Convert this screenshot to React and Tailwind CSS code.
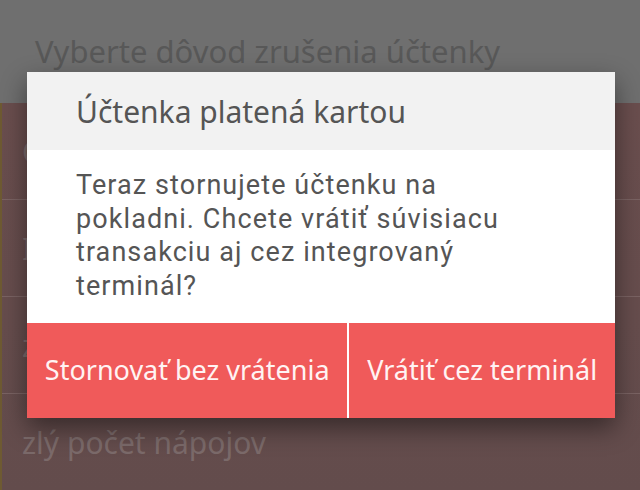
const reasons = ["Chybne zadaná položka", "Iný dôvod", "zlá platba", "zlý počet nápojov"];

export default function App() {
  return (
    <div className="relative h-[490px] w-[640px] overflow-hidden bg-[#674c4c] font-['Noto_Sans',sans-serif]">
      <div className="flex h-[103px] items-start bg-[#6f6f6f] pl-[35px] pt-[33px]">
        <span className="text-[31px] leading-[36px] text-[#585858]">Vyberte dôvod zrušenia účtenky</span>
      </div>
      <div className="flex flex-col border-l-2 border-[#6e5a32] bg-gradient-to-b from-[#6a4e4e] to-[#634c4c]">
        {reasons.map((r, i) => (
          <div
            key={r}
            className={
              "flex h-[97px] items-center pl-[20px] " +
              (i < reasons.length - 1 ? "border-b border-[#7a6363]" : "")
            }
          >
            <span className="text-[30px] text-[#7b6a6a]">{r}</span>
          </div>
        ))}
      </div>

      <div className="absolute left-[27px] top-[72px] flex w-[588px] flex-col bg-white shadow-[0_10px_24px_rgba(0,0,0,0.45)]">
        <div className="flex h-[78px] items-center bg-[#f2f2f2] pl-[49px]">
          <span className="text-[30px] text-[#555555]">Účtenka platená kartou</span>
        </div>
        <div className="h-[173px] pl-[49px] pt-[19px]">
          <p className="w-[465px] font-['Roboto',sans-serif] text-[27px] leading-[33.5px] tracking-[0.04em] text-[#555555]">
            Teraz stornujete účtenku na pokladni. Chcete vrátiť súvisiacu transakciu aj cez integrovaný terminál?
          </p>
        </div>
        <div className="flex h-[95px] gap-[2px]">
          <button className="flex flex-auto items-center justify-center whitespace-nowrap bg-[#f05a5a] px-[16px] text-[27px] text-[#fff3f3]">
            Stornovať bez vrátenia
          </button>
          <button className="flex flex-auto items-center justify-center whitespace-nowrap bg-[#f05a5a] px-[16px] text-[27px] text-[#fff3f3]">
            Vrátiť cez terminál
          </button>
        </div>
      </div>
    </div>
  );
}
